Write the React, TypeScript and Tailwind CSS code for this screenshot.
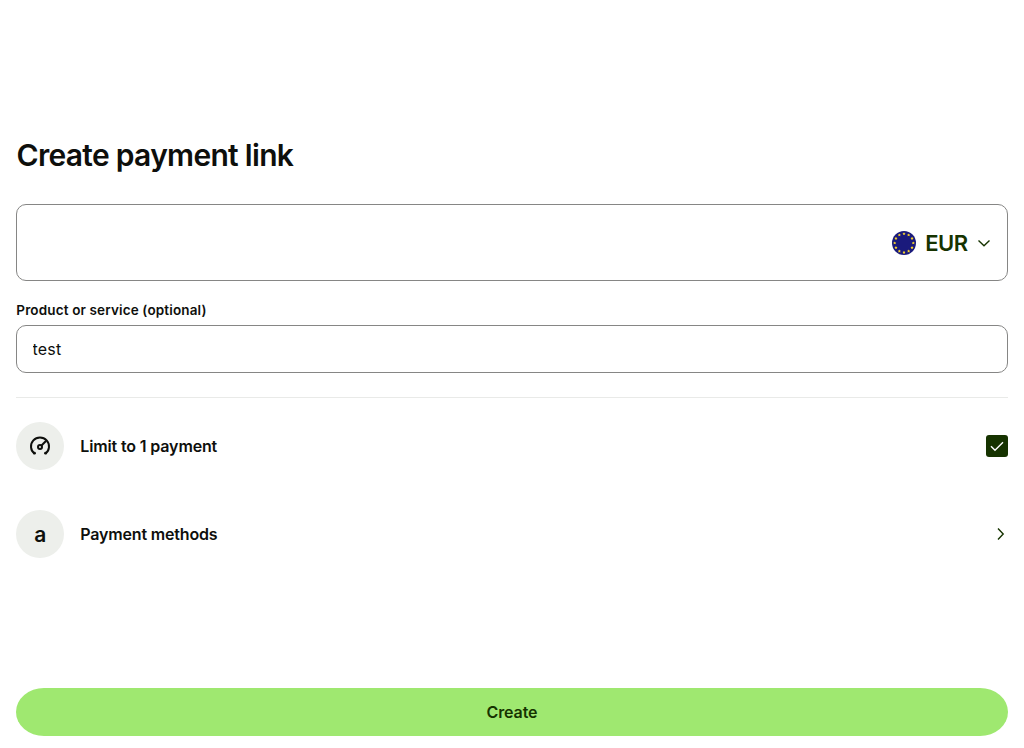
export default function App() {
  const stars = Array.from({ length: 12 }, (_, i) => i * 30);
  return (
    <main className="flex h-[748px] flex-col bg-white px-4 pt-[136px] font-['Inter',sans-serif] text-[#0e0f0c]">
      <h1 className="h-[40px] pl-[0.5px] text-[30px] leading-[39px] font-semibold tracking-[-0.7px]">Create payment link</h1>
      <div className="mt-[28px] flex h-[77px] items-center justify-end rounded-[10px] border border-[#868685] pr-[15px]">
        <button className="flex items-center text-[22px] font-semibold tracking-[-0.6px] text-[#163300]">
          <svg className="mr-[9px] size-6" viewBox="0 0 24 24">
            <circle cx="12" cy="12" r="12" fill="#1a1a7c" />
            {stars.map((a) => (
              <path key={a} transform={`rotate(${a} 12 12) translate(12 2.7) rotate(${-a}) scale(1.4)`} d="M0-1.1.4-.4 1.1-.3.6.2.75.95 0 .6-.75.95-.6.2-1.1-.3-.4-.4Z" fill="#ffda2c" />
            ))}
          </svg>
          <span className="pt-[2px]">EUR</span>
          <svg className="ml-[8.6px] size-4" viewBox="0 0 16 16" fill="none" stroke="currentColor" strokeWidth="1.4"><path d="m2.5 5.5 5.5 5.2 5.5-5.2" /></svg>
        </button>
      </div>
      <label className="mt-[18px] h-[22px] pl-[0.3px] text-[13.5px] leading-[22px] font-semibold tracking-[0.14px]" htmlFor="product">Product or service (optional)</label>
      <input id="product" defaultValue="test" className="mt-1 h-12 shrink-0 rounded-[10px] border border-[#868685] px-[15.5px] text-[16px] tracking-[0.2px] outline-none" />
      <hr className="mt-6 border-[#e9eae8]" />
      <div className="mt-6 flex h-12 items-center">
        <span className="flex size-12 items-center justify-center rounded-full bg-[#edefeb]">
          <svg className="size-6" viewBox="0 0 24 24" fill="none" stroke="currentColor" strokeWidth="2">
            <path d="M6.6 19.7A9 9 0 1 1 17.4 19.7" />
            <circle cx="12" cy="13" r="2" />
            <path d="m13.5 11.5 4.7-4.7" />
            <circle cx="6.5" cy="19.2" r="1.4" fill="currentColor" stroke="none" />
            <circle cx="17.5" cy="19.2" r="1.4" fill="currentColor" stroke="none" />
          </svg>
        </span>
        <span className="ml-4 grow pl-[0.3px] text-[16px] font-semibold tracking-[-0.14px]">Limit to 1 payment</span>
        <span className="flex size-[22px] items-center justify-center rounded-[3px] bg-[#163300] text-white">
          <svg className="size-4" viewBox="0 0 16 16" fill="none" stroke="currentColor" strokeWidth="1.4"><path d="m2 8.2 4 4 8-8" /></svg>
        </span>
      </div>
      <div className="mt-10 flex h-12 items-center">
        <span className="flex size-12 items-center justify-center rounded-full bg-[#edefeb] pt-px pl-[0.5px] text-[21px] font-semibold">a</span>
        <span className="ml-4 grow pl-[0.3px] text-[16px] font-semibold tracking-[-0.17px]">Payment methods</span>
        <svg className="size-4 text-[#163300]" viewBox="0 0 16 16" fill="none" stroke="currentColor" strokeWidth="1.4"><path d="m6 2.5 5.2 5.5L6 13.5" /></svg>
      </div>
      <button className="mt-[130px] h-12 shrink-0 rounded-[28px/24px] bg-[#9fe870] text-[16px] font-semibold tracking-[-0.1px] text-[#163300]">Create</button>
    </main>
  );
}
